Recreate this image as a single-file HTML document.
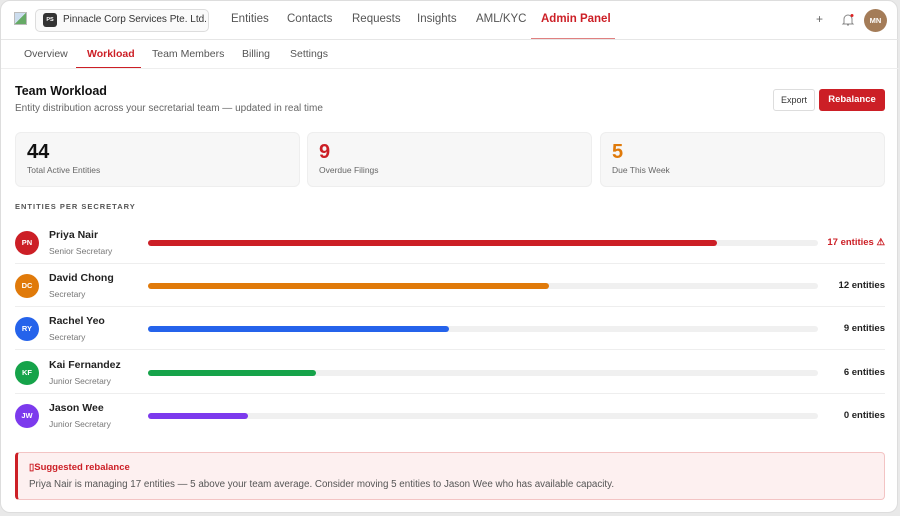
<!DOCTYPE html><html><head><style>
*{box-sizing:border-box;margin:0;padding:0}
body{width:900px;height:516px;background:#e9e9e9;font-family:"Liberation Sans",sans-serif;overflow:hidden}
.card{position:absolute;left:0;top:0;width:898px;height:513px;background:#fff;border-radius:10px;border:1px solid #ddd}
.abs{position:absolute}
.nav{font-size:11.5px;color:#555}
.sub{font-size:10.5px;color:#555}
.stat{position:absolute;top:131px;height:55px;width:285px;background:#f7f7f7;border:1px solid #eee;border-radius:6px}
.stat b{position:absolute;left:11px;top:8px;font-size:20px}
.stat span{position:absolute;left:11px;top:32px;font-size:8.5px;color:#666}
.row{position:absolute;left:15px;width:870px;height:43px;border-bottom:1px solid #eee}
.av{position:absolute;left:0;top:10px;width:24px;height:24px;border-radius:50%;color:#fff;font-size:7.5px;font-weight:bold;text-align:center;line-height:24px}
.nm{position:absolute;left:34px;top:8px;font-size:10.5px;font-weight:bold;color:#222}
.rl{position:absolute;left:34px;top:25px;font-size:8.5px;color:#777}
.tr{position:absolute;left:133px;top:19px;width:670px;height:6px;background:#f0f0f0;border-radius:3px}
.br{height:6px;border-radius:3px}
.ct{position:absolute;right:0;top:16px;font-size:9.5px;font-weight:bold;color:#222}
</style></head><body><div class="card">
<div class="abs" style="left:13px;top:11px;width:13px;height:13px;border:1px solid #bbb;background:linear-gradient(135deg,#cde 50%,#6a6 50%)"></div>
<div class="abs" style="left:34px;top:8px;width:174px;height:23px;border:1px solid #ddd;border-radius:5px;background:#fafafa"></div>
<div class="abs" style="left:42px;top:12px;width:14px;height:14px;border-radius:3px;background:#333;color:#fff;font-size:5.5px;font-weight:bold;text-align:center;line-height:14px">PS</div>
<div class="abs" style="left:62px;top:13px;font-size:10px;color:#333">Pinnacle Corp Services Pte. Ltd.</div>
<div class="abs nav" style="left:230px;top:12px">Entities</div>
<div class="abs nav" style="left:286px;top:12px">Contacts</div>
<div class="abs nav" style="left:351px;top:12px">Requests</div>
<div class="abs nav" style="left:416px;top:12px">Insights</div>
<div class="abs nav" style="left:475px;top:12px">AML/KYC</div>
<div class="abs nav" style="left:540px;top:12px;color:#cc1f26;font-weight:bold">Admin Panel</div>
<div class="abs" style="left:530px;top:37px;width:84px;height:2px;background:#e08080"></div>
<div class="abs" style="left:815px;top:11px;font-size:12px;color:#666">+</div>
<svg class="abs" style="left:840px;top:12px" width="14" height="14" viewBox="0 0 14 14"><path d="M3 10V6a4 4 0 0 1 8 0v4l1 1H2z M6 12h2" fill="none" stroke="#888" stroke-width="1"/><circle cx="11" cy="2.5" r="1.5" fill="#d22"/></svg>
<div class="abs" style="left:863px;top:8px;width:23px;height:23px;border-radius:50%;background:#a47c58;color:#fff;font-size:7.5px;font-weight:bold;text-align:center;line-height:23px">MN</div>
<div class="abs" style="left:0;top:38px;width:898px;height:1px;background:#e6e6e6"></div>
<div class="abs sub" style="left:23px;top:47px">Overview</div>
<div class="abs sub" style="left:86px;top:47px;color:#cc1f26;font-weight:bold">Workload</div>
<div class="abs" style="left:75px;top:66px;width:65px;height:2px;background:#cc1f26"></div>
<div class="abs sub" style="left:151px;top:47px">Team Members</div>
<div class="abs sub" style="left:241px;top:47px">Billing</div>
<div class="abs sub" style="left:289px;top:47px">Settings</div>
<div class="abs" style="left:0;top:67px;width:898px;height:1px;background:#eee"></div>
<div class="abs" style="left:14px;top:83px;font-size:12.5px;font-weight:bold;color:#111">Team Workload</div>
<div class="abs" style="left:14px;top:102px;font-size:10px;color:#666">Entity distribution across your secretarial team — updated in real time</div>
<div class="abs" style="left:772px;top:88px;width:42px;height:22px;border:1px solid #ddd;border-radius:3px;font-size:9px;color:#333;text-align:center;line-height:20px">Export</div>
<div class="abs" style="left:818px;top:88px;width:66px;height:22px;background:#cc1f26;border-radius:3px;font-size:9.5px;font-weight:bold;color:#fff;text-align:center;line-height:22px">Rebalance</div>
<div class="stat" style="left:14px"><b style="color:#111">44</b><span>Total Active Entities</span></div>
<div class="stat" style="left:306px"><b style="color:#cc1f26">9</b><span>Overdue Filings</span></div>
<div class="stat" style="left:599px"><b style="color:#e07a0a">5</b><span>Due This Week</span></div>
<div class="abs" style="left:14px;top:201px;font-size:7.5px;font-weight:bold;color:#555;letter-spacing:1px">ENTITIES PER SECRETARY</div>
<div class="row" style="top:220px;left:14px"><div class="av" style="background:#cc1f26">PN</div><div class="nm">Priya Nair</div><div class="rl">Senior Secretary</div><div class="tr"><div class="br" style="width:569px;background:#cc1f26"></div></div><div class="ct" style="color:#cc1f26">17 entities ⚠</div></div>
<div class="row" style="top:263px;left:14px"><div class="av" style="background:#e07a0a">DC</div><div class="nm">David Chong</div><div class="rl">Secretary</div><div class="tr"><div class="br" style="width:401px;background:#e07a0a"></div></div><div class="ct">12 entities</div></div>
<div class="row" style="top:306px;left:14px"><div class="av" style="background:#2563eb">RY</div><div class="nm">Rachel Yeo</div><div class="rl">Secretary</div><div class="tr"><div class="br" style="width:301px;background:#2563eb"></div></div><div class="ct">9 entities</div></div>
<div class="row" style="top:350px;left:14px"><div class="av" style="background:#16a34a">KF</div><div class="nm">Kai Fernandez</div><div class="rl">Junior Secretary</div><div class="tr"><div class="br" style="width:168px;background:#16a34a"></div></div><div class="ct">6 entities</div></div>
<div class="row" style="top:393px;left:14px;border:none"><div class="av" style="background:#7c3aed">JW</div><div class="nm">Jason Wee</div><div class="rl">Junior Secretary</div><div class="tr"><div class="br" style="width:100px;background:#7c3aed"></div></div><div class="ct">0 entities</div></div>
<div class="abs" style="left:14px;top:451px;width:870px;height:48px;background:#fdf0f0;border:1px solid #f3c4c4;border-left:3px solid #cc1f26;border-radius:4px"></div>
<div class="abs" style="left:28px;top:461px;font-size:9.5px;font-weight:bold;color:#cc1f26">▯Suggested rebalance</div>
<div class="abs" style="left:28px;top:478px;font-size:9.8px;color:#555">Priya Nair is managing 17 entities — 5 above your team average. Consider moving 5 entities to Jason Wee who has available capacity.</div>
</div></body></html>
